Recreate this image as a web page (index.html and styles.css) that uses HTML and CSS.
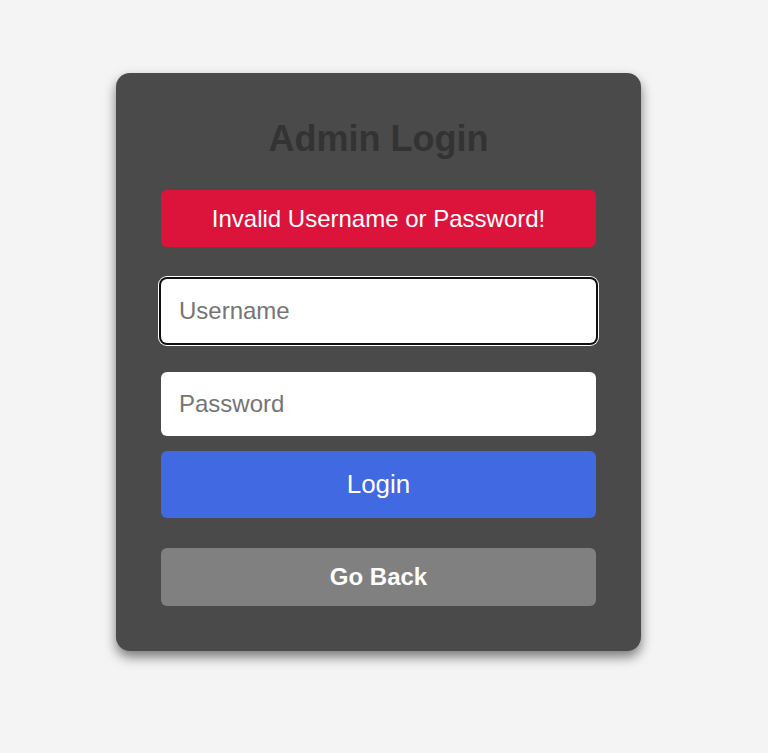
FILE: index.html
```html
<!DOCTYPE html>
<html lang="en">
<head>
<meta charset="utf-8">
<title>Admin Login</title>
<link rel="stylesheet" href="styles.css">
</head>
<body>
<div class="page">
  <div class="card">
    <h2 class="title">Admin Login</h2>
    <div class="error">Invalid Username or Password!</div>
    <form class="form">
      <input class="field field-focus" type="text" placeholder="Username">
      <input class="field" type="password" placeholder="Password">
      <button class="btn btn-login" type="button">Login</button>
    </form>
    <button class="btn btn-back" type="button">Go Back</button>
  </div>
</div>
</body>
</html>
```

FILE: styles.css
```css
html, body {
  margin: 0;
  padding: 0;
  background: #f4f4f4;
  font-family: "Liberation Sans", Arial, sans-serif;
}
.page {
  padding-top: 73px;
  padding-left: 116px;
  padding-bottom: 40px;
}
.card {
  width: 525px;
  box-sizing: border-box;
  padding: 45px;
  background: #4a4a4a;
  border-radius: 14px;
  box-shadow: 0 6px 12px rgba(0, 0, 0, 0.5);
  display: flex;
  flex-direction: column;
}
.title {
  margin: 0;
  text-align: center;
  color: #333333;
  font-size: 36px;
  line-height: 42px;
  font-weight: bold;
}
.error {
  margin-top: 30px;
  height: 57px;
  background: #dc143c;
  color: #ffffff;
  border-radius: 6px;
  font-size: 24px;
  display: flex;
  align-items: center;
  justify-content: center;
}
.form {
  margin: 0;
  padding-top: 32px;
  display: flex;
  flex-direction: column;
}
.field {
  height: 64px;
  box-sizing: border-box;
  border: none;
  border-radius: 6px;
  background: #ffffff;
  padding: 0 18px;
  font-family: "Liberation Sans", Arial, sans-serif;
  font-size: 24px;
  color: #333;
  outline: none;
}
.field::placeholder {
  color: #757575;
}
.field-focus {
  box-shadow: 0 0 0 2px #101010, 0 0 0 3px #ffffff;
  margin-bottom: 29px;
}
.field + .field {
  margin-bottom: 15px;
}
.btn {
  border: none;
  border-radius: 6px;
  color: #ffffff;
  font-family: "Liberation Sans", Arial, sans-serif;
  cursor: pointer;
  width: 100%;
}
.btn-login {
  height: 67px;
  background: #4169e1;
  font-size: 26px;
}
.btn-back {
  margin-top: 30px;
  height: 58px;
  background: #808080;
  font-size: 24px;
  font-weight: bold;
}
```
